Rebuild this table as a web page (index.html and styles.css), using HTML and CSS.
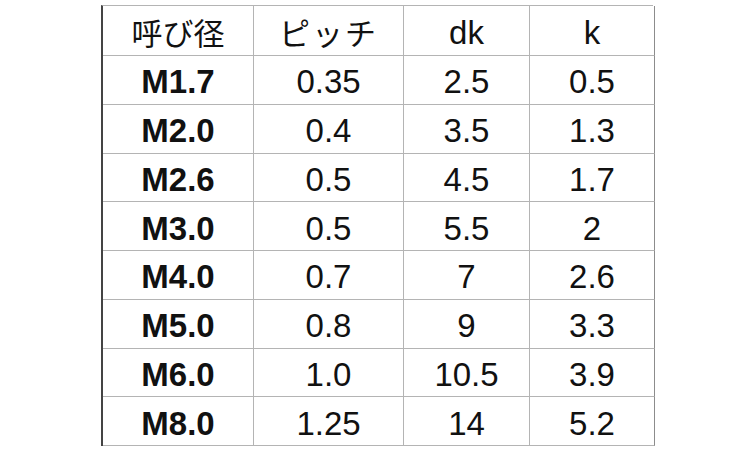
FILE: index.html
```html
<!DOCTYPE html>
<html lang="ja">
<head>
<meta charset="utf-8">
<link rel="stylesheet" href="styles.css">
</head>
<body>
<div class="spec">
  <div class="cell head jp">呼び径</div>
  <div class="cell head jp pitch">ピッチ</div>
  <div class="cell head">dk</div>
  <div class="cell head">k</div>

  <div class="cell size">M1.7</div><div class="cell">0.35</div><div class="cell">2.5</div><div class="cell">0.5</div>
  <div class="cell size">M2.0</div><div class="cell">0.4</div><div class="cell">3.5</div><div class="cell">1.3</div>
  <div class="cell size">M2.6</div><div class="cell">0.5</div><div class="cell">4.5</div><div class="cell">1.7</div>
  <div class="cell size">M3.0</div><div class="cell">0.5</div><div class="cell">5.5</div><div class="cell">2</div>
  <div class="cell size">M4.0</div><div class="cell">0.7</div><div class="cell">7</div><div class="cell">2.6</div>
  <div class="cell size">M5.0</div><div class="cell">0.8</div><div class="cell">9</div><div class="cell">3.3</div>
  <div class="cell size">M6.0</div><div class="cell">1.0</div><div class="cell">10.5</div><div class="cell">3.9</div>
  <div class="cell size">M8.0</div><div class="cell">1.25</div><div class="cell">14</div><div class="cell">5.2</div>
</div>
</body>
</html>
```
FILE: styles.css
```css
html, body {
  margin: 0;
  padding: 0;
  background: #ffffff;
}

body {
  width: 750px;
  height: 450px;
  overflow: hidden;
  font-family: "Liberation Sans", Arial, "Noto Sans CJK JP", sans-serif;
  color: #111111;
}

.spec {
  box-sizing: border-box;
  margin: 5px 0 0 101px;
  width: 552px;
  display: grid;
  grid-template-columns: 151px 150px 126px 125px;
  grid-template-rows: 50px repeat(8, 48.75px);
  border-top: 1px solid #b4b4b4;
  border-left: 2px solid #444444;
}

.cell {
  box-sizing: border-box;
  display: flex;
  align-items: center;
  justify-content: center;
  border-right: 1px solid #b4b4b4;
  border-bottom: 1px solid #b4b4b4;
  font-size: 33px;
  line-height: 1;
  padding-top: 4px;
}

.cell:nth-child(4n) {
  border-right-color: #8c8c8c;
}

.jp {
  font-family: "Noto Sans CJK JP", sans-serif;
  font-size: 31px;
  font-weight: 400;
  padding-top: 2px;
}

.pitch {
  letter-spacing: 2px;
}

.size {
  font-weight: 700;
}
```
